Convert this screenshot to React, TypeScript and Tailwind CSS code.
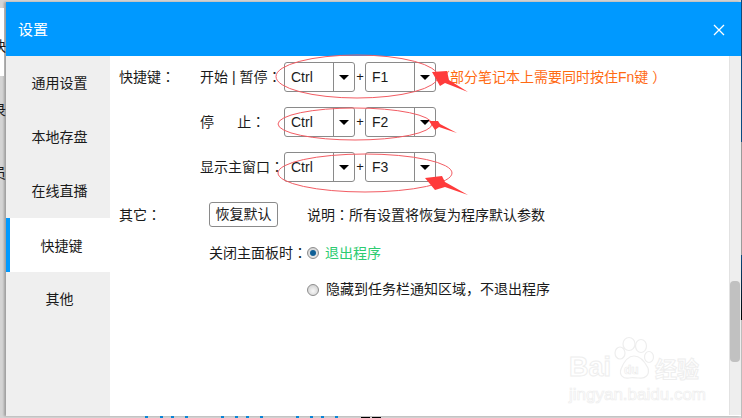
const cjk = "font-['Liberation_Sans','Noto_Sans_CJK_SC',sans-serif]";

function Colon() {
  return <span className="font-['Noto_Sans_CJK_TC',sans-serif]">：</span>;
}

function Select({ label }: { label: string }) {
  return (
    <div className="flex h-[30px] w-[71px] rounded-[3px] border border-[#8a8a8a] bg-white">
      <div className="flex-1 pl-[6px] text-[14px] leading-[28px]">{label}</div>
      <div className="flex w-[21px] items-center justify-center border-l border-[#8a8a8a]">
        <div className="h-0 w-0 border-x-[5px] border-t-[5px] border-x-transparent border-t-black" />
      </div>
    </div>
  );
}

function ShortcutRow({ label, k }: { label: string; k: string }) {
  return (
    <div className="flex h-[30px] items-center">
      <div className="w-[84px] whitespace-pre text-[14px]">
        {label}
        <Colon />
      </div>
      <Select label="Ctrl" />
      <div className="w-[10px] text-center text-[13px]">+</div>
      <Select label={k} />
    </div>
  );
}

function Radio({ checked }: { checked?: boolean }) {
  return (
    <div className="flex h-[12px] w-[12px] items-center justify-center rounded-full border border-[#8d8d8d] bg-[radial-gradient(circle_at_50%_60%,#f8f8f8,#c8c8c8)]">
      {checked && <div className="h-[6px] w-[6px] rounded-full bg-[#0f5f96]" />}
    </div>
  );
}

function Tab({ label, active }: { label: string; active?: boolean }) {
  return (
    <div
      className={`flex h-[54px] items-center justify-center pl-[3px] pt-[1px] text-[14px] ${
        active ? "border-l-4 border-[#0099ff] bg-white pt-[3px]" : ""
      }`}
    >
      {label}
    </div>
  );
}

const ticks = [145, 160, 171, 185, 221, 235, 246, 260, 296, 310, 321, 335];

export default function App() {
  return (
    <div className={`relative h-[418px] w-[742px] overflow-hidden bg-[#d4d4d4] pt-[2px] pl-[6px] pr-px text-[#1a1a1a] ${cjk}`}>
      <div className="flex h-[414px] flex-col bg-white shadow-[-2px_0_2px_rgba(0,0,0,0.25)]">
        <div className="flex h-[54px] shrink-0 items-center justify-between bg-[#0099ff] pl-[12px] pr-[16px] pt-[2px] text-white">
          <span className="text-[15px]">设置</span>
          <svg width="12" height="12" viewBox="0 0 12 12" fill="none" stroke="white" strokeWidth="1.3">
            <path d="M1 1l10 10M11 1L1 11" />
          </svg>
        </div>
        <div className="flex min-h-0 flex-1">
          <div className="w-[104px] shrink-0 bg-[#efefef]">
            <Tab label="通用设置" />
            <Tab label="本地存盘" />
            <Tab label="在线直播" />
            <Tab label="快捷键" active />
            <Tab label="其他" />
          </div>
          <div className="min-w-0 flex-1 pl-[9px] pt-[6px] text-[14px]">
            <div className="flex">
              <div className="w-[81px] pt-[4px]">
                快捷键
                <Colon />
              </div>
              <div className="flex flex-col gap-[15px]">
                <div className="flex items-center">
                  <ShortcutRow label="开始 | 暂停" k="F1" />
                  <span className="whitespace-nowrap text-[#ff6a13]">（部分笔记本上需要同时按住Fn键 ）</span>
                </div>
                <ShortcutRow label={"停      止"} k="F2" />
                <ShortcutRow label="显示主窗口" k="F3" />
              </div>
            </div>
            <div className="mt-[20px] flex items-center">
              <div className="w-[90px]">
                其它
                <Colon />
              </div>
              <div className="flex h-[25px] w-[69px] items-center justify-center rounded-[3px] border border-[#8a8a8a]">恢复默认</div>
              <div className="ml-[29px]">
                说明
                <Colon />
                所有设置将恢复为程序默认参数
              </div>
            </div>
            <div className="ml-[90px] mt-[15px] flex items-center">
              <div className="w-[98px] whitespace-nowrap">
                关闭主面板时
                <Colon />
              </div>
              <Radio checked />
              <span className="ml-[6px] text-[#2ecc71]">退出程序</span>
            </div>
            <div className="ml-[188px] mt-[15px] flex items-center">
              <Radio />
              <span className="ml-[7px]">隐藏到任务栏通知区域，不退出程序</span>
            </div>
          </div>
          <div className="mb-px flex w-[12px] shrink-0 flex-col border-l border-[#e2e2e2] bg-[#eeeeee]">
            <div className="mt-[225px] h-[81px] w-[10px] rounded-[4px] bg-[#c1c1c1]" />
          </div>
        </div>
      </div>

      {/* window behind the dialog, visible at the left, right and bottom edges */}
      <div className="absolute left-0 top-[8px] h-[68px] w-[4px] bg-white" />
      <span className="absolute left-[-8px] top-[36px] text-[14px]">快</span>
      <span className="absolute left-[-8px] top-[100px] text-[14px]">录</span>
      <span className="absolute left-[-8px] top-[163px] text-[14px]">员</span>
      <div className="absolute right-0 top-0 h-[418px] w-px bg-[linear-gradient(to_bottom,#0a4a80_0,#0a4a80_142px,#9a9a9a_142px,#9a9a9a_255px,#0a4a80_255px,#000_320px,#bdbdbd_320px)]" />
      {ticks.map((x) => (
        <div key={x} className="absolute bottom-0 h-[2px] w-[3px] bg-[#0a84d6]" style={{ left: x }} />
      ))}
      <div className="absolute bottom-0 left-[361px] h-px w-[9px] bg-black" />
      <div className="absolute bottom-0 left-[372px] h-px w-[9px] bg-black" />

      <svg className="absolute left-0 top-0" width="742" height="418" fill="none">
        <g stroke="#f25c63" strokeWidth="1">
          <ellipse cx="357" cy="76.5" rx="81" ry="21.5" />
          <ellipse cx="355" cy="124" rx="77" ry="16" />
          <ellipse cx="365" cy="173" rx="87" ry="19" />
        </g>
        <g fill="#ff3b3b">
          <path d="M432 72L447 71L449 80L468 92L445 83L440 86z" />
          <path d="M429 121L438 121L440 124L457 133L439 127L435 130z" />
          <path d="M425 178L442 176L445 182L468 195L445 187L435 190z" />
        </g>
        <g stroke="#eeeeee" strokeWidth="1.2" fill="white">
          <ellipse cx="629" cy="344" rx="6" ry="6.5" />
          <ellipse cx="641" cy="346" rx="5.5" ry="6.5" />
          <ellipse cx="620" cy="353" rx="5" ry="6" />
          <ellipse cx="649" cy="357" rx="4.5" ry="5.5" />
          <path d="M634 356c8 0 12 8 14 12 2 7-3 11-9 10-3 0-7-1-10 0-6 1-10-3-8-9 2-5 6-13 13-13z" />
        </g>
      </svg>
      <div className="absolute left-[569px] top-[352px] whitespace-nowrap text-[27px] font-bold leading-[30px] text-white [-webkit-text-stroke:1px_#eeeeee]">Bai</div>
      <div className="absolute left-[624px] top-[363px] text-[12px] font-bold leading-[14px] text-white [-webkit-text-stroke:0.6px_#eaeaea]">du</div>
      <div className="absolute left-[655px] top-[358px] whitespace-nowrap text-[22px] font-bold leading-[24px] text-white [-webkit-text-stroke:1px_#eeeeee]">经验</div>
      <div className="absolute left-[569px] top-[385px] whitespace-nowrap text-[17px] leading-[20px] text-white [-webkit-text-stroke:0.7px_#eeeeee]">jingyan.baidu.com</div>
    </div>
  );
}
